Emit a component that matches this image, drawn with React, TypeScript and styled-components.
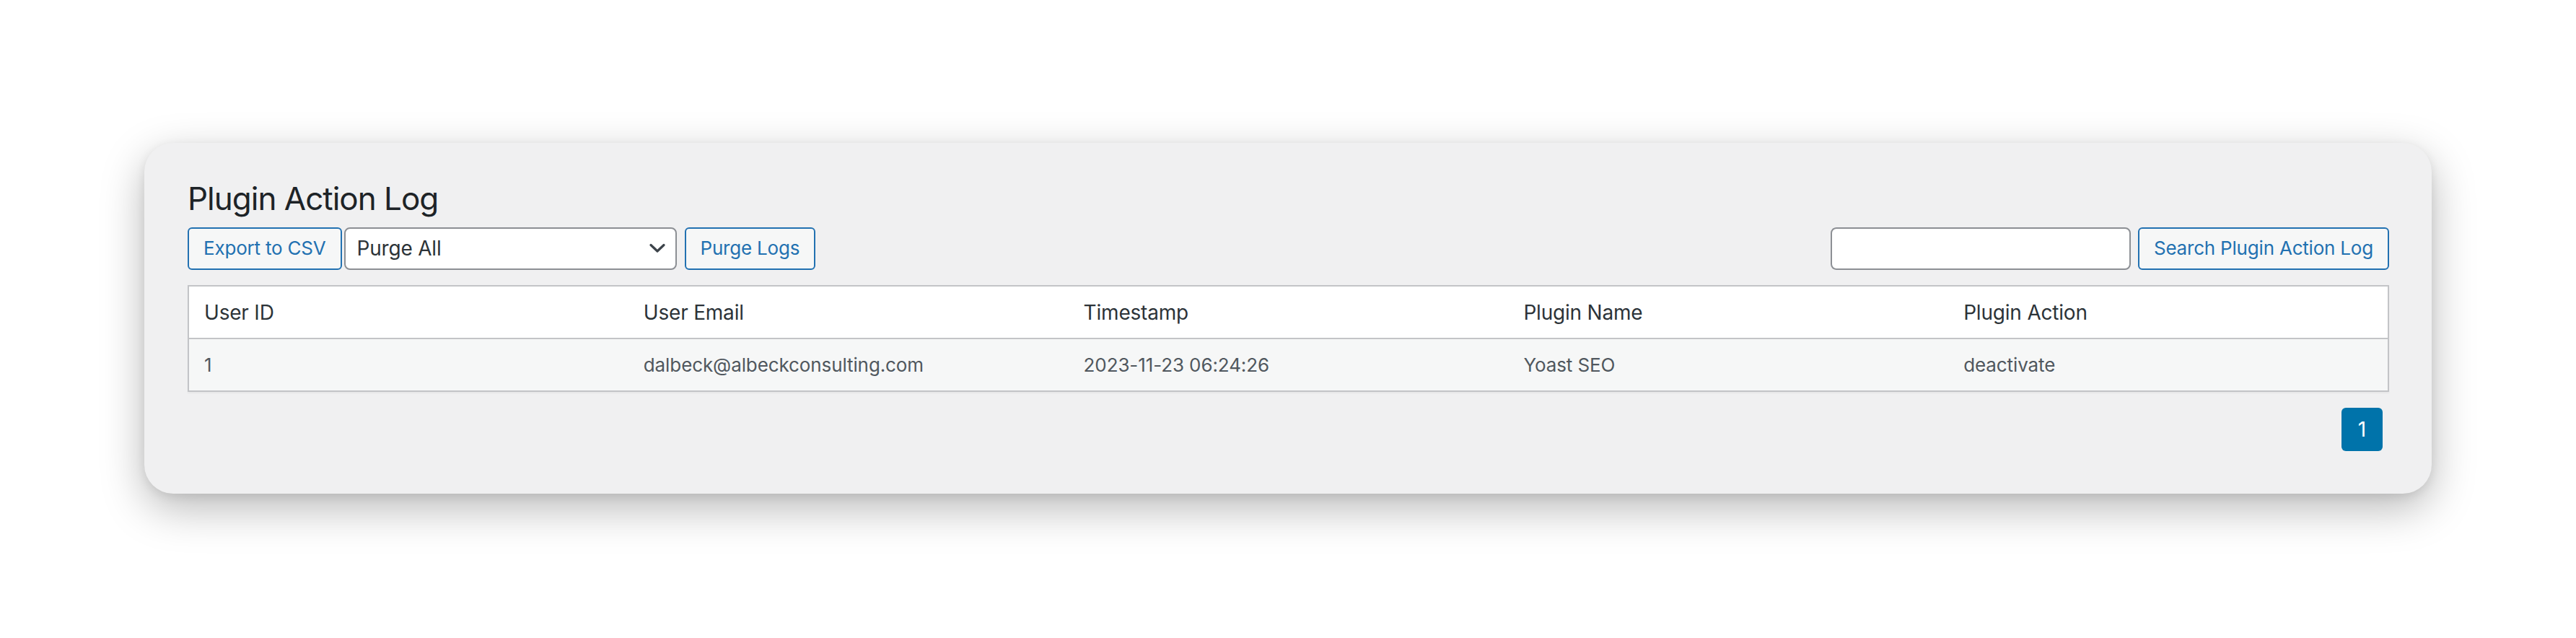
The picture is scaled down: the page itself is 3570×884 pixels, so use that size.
import styled, { createGlobalStyle } from "styled-components";

const GlobalStyle = createGlobalStyle`
  html, body {
    margin: 0;
    padding: 0;
    background: #ffffff;
  }
  body {
    font-family: Inter, "Noto Sans", "Liberation Sans", sans-serif;
    color: #3c434a;
  }
`;

const columns = ["User ID", "User Email", "Timestamp", "Plugin Name", "Plugin Action"];

const rows = [
  ["1", "dalbeck@albeckconsulting.com", "2023-11-23 06:24:26", "Yoast SEO", "deactivate"],
];

const Chevron = () => (
  <svg width="22" height="14" viewBox="0 0 22 14" fill="none">
    <path d="M2 2.5 L11 11 L20 2.5" stroke="#3c434a" strokeWidth="3.2" strokeLinecap="round" strokeLinejoin="round" />
  </svg>
);

const App = () => {
  return (
    <>
      <GlobalStyle />
      <Page>
        <Card>
          <Title>Plugin Action Log</Title>

          <Toolbar>
            <ToolGroup>
              <Button type="button">Export to CSV</Button>
              <SelectWrap>
                <Select defaultValue="all">
                  <option value="all">Purge All</option>
                </Select>
                <SelectArrow>
                  <Chevron />
                </SelectArrow>
              </SelectWrap>
              <Button type="button">Purge Logs</Button>
            </ToolGroup>

            <ToolGroup>
              <SearchInput type="search" />
              <Button type="button" $gapLeft={10}>Search Plugin Action Log</Button>
            </ToolGroup>
          </Toolbar>

          <Table>
            <thead>
              <tr>
                {columns.map((c) => (
                  <Th key={c}>{c}</Th>
                ))}
              </tr>
            </thead>
            <tbody>
              {rows.map((r, i) => (
                <BodyRow key={i} $alt={i % 2 === 0}>
                  {r.map((v, j) => (
                    <Td key={j}>{v}</Td>
                  ))}
                </BodyRow>
              ))}
            </tbody>
          </Table>

          <Pagination>
            <PageButton $current>1</PageButton>
          </Pagination>
        </Card>
      </Page>
    </>
  );
};

const Page = styled.div`
  padding: 198px 200px 200px;
`;

const Card = styled.section`
  background: #f0f0f1;
  border-radius: 40px;
  padding: 46px 59px 59px 60px;
  box-shadow: 0 20px 60px rgba(0, 0, 0, 0.28), 0 4px 14px rgba(0, 0, 0, 0.08);
`;

const Title = styled.h1`
  margin: 0 0 8px;
  font-size: 44px;
  font-weight: 400;
  line-height: 62px;
  color: #1d2327;
  letter-spacing: -1px;
`;

const Toolbar = styled.div`
  display: flex;
  justify-content: space-between;
  align-items: center;
  height: 60px;
`;

const ToolGroup = styled.div`
  display: flex;
  align-items: center;
  height: 100%;
`;

const Button = styled.button<{ $gapLeft?: number }>`
  height: 59px;
  padding: 0 20px;
  margin-left: ${(p) => p.$gapLeft ?? 0}px;
  background: #f6f7f7;
  color: #2271b1;
  border: 2px solid #2271b1;
  border-radius: 6px;
  font-family: Inter, "Noto Sans", "Liberation Sans", sans-serif;
  font-size: 26px;
  line-height: 1;
  letter-spacing: -0.2px;
  cursor: pointer;
  white-space: nowrap;
`;

const SelectWrap = styled.div`
  position: relative;
  width: 461px;
  height: 59px;
  margin: 0 11px 0 3px;
`;

const Select = styled.select`
  appearance: none;
  width: 100%;
  height: 100%;
  padding: 0 60px 0 16px;
  background: #ffffff;
  border: 2px solid #8c8f94;
  border-radius: 8px;
  color: #2c3338;
  font-family: Inter, "Noto Sans", "Liberation Sans", sans-serif;
  font-size: 28px;
  letter-spacing: -0.2px;
`;

const SelectArrow = styled.span`
  position: absolute;
  right: 16px;
  top: 50%;
  transform: translateY(-50%);
  display: flex;
  pointer-events: none;
`;

const SearchInput = styled.input`
  box-sizing: border-box;
  width: 416px;
  height: 59px;
  padding: 0 16px;
  background: #ffffff;
  border: 2px solid #8c8f94;
  border-radius: 8px;
  font-family: Inter, "Noto Sans", "Liberation Sans", sans-serif;
  font-size: 28px;
  outline: none;
`;

const Table = styled.table`
  width: 100%;
  margin-top: 21px;
  border-collapse: collapse;
  table-layout: fixed;
  border: 2px solid #c3c4c7;
  background: #ffffff;
  box-shadow: 0 2px 2px rgba(0, 0, 0, 0.04);
`;

const Th = styled.th`
  height: 71px;
  padding: 0 21px;
  text-align: left;
  font-weight: 400;
  font-size: 28px;
  letter-spacing: -0.2px;
  color: #2c3338;
  border-bottom: 2px solid #c3c4c7;
`;

const BodyRow = styled.tr<{ $alt?: boolean }>`
  background: ${(p) => (p.$alt ? "#f6f7f7" : "#ffffff")};
`;

const Td = styled.td`
  height: 71px;
  padding: 0 21px;
  font-size: 26px;
  letter-spacing: -0.1px;
  color: #50575e;
`;

const Pagination = styled.nav`
  display: flex;
  justify-content: flex-end;
  margin-top: 22px;
  padding-right: 9px;
`;

const PageButton = styled.span<{ $current?: boolean }>`
  display: flex;
  align-items: center;
  justify-content: center;
  width: 57px;
  height: 60px;
  border-radius: 6px;
  background: ${(p) => (p.$current ? "#0073aa" : "transparent")};
  color: ${(p) => (p.$current ? "#ffffff" : "#2271b1")};
  font-size: 28px;
`;

export default App;
